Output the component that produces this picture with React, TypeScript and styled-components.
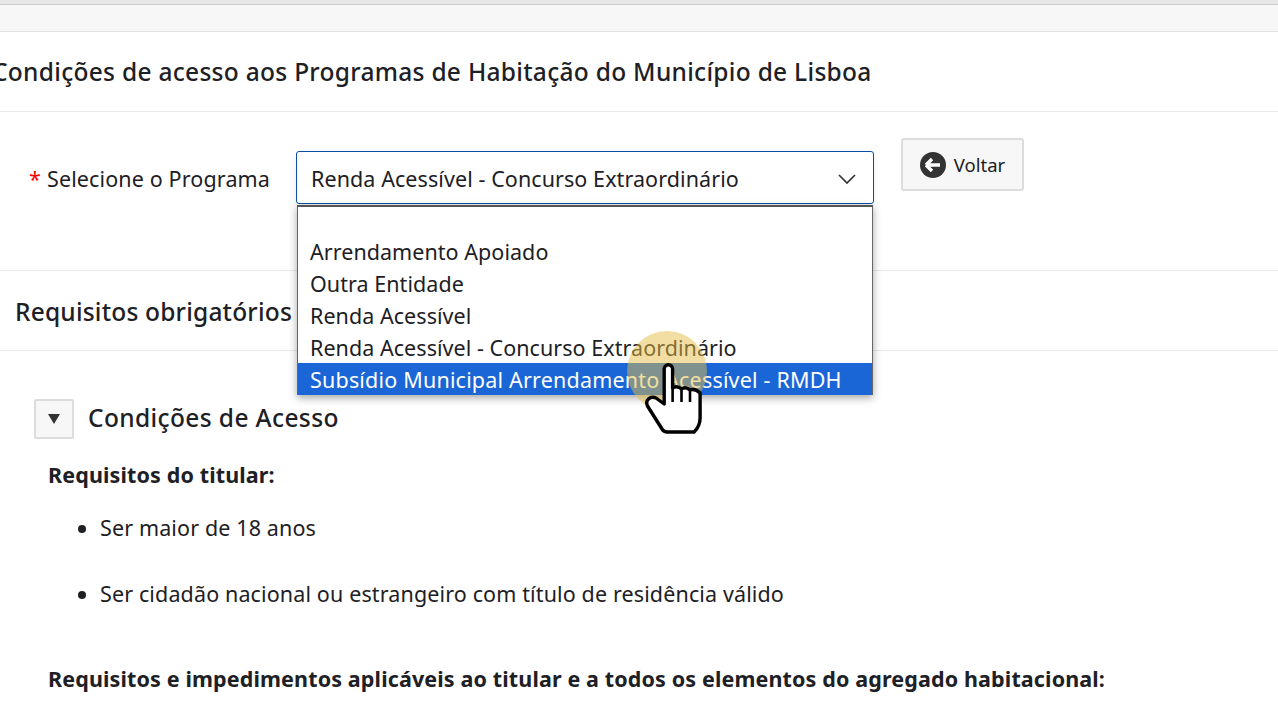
import React from "react";
import styled, { createGlobalStyle } from "styled-components";

const Global = createGlobalStyle`
  html, body { margin: 0; padding: 0; background: #fff; overflow: hidden; }
  body { font-family: "Noto Sans", "Open Sans", sans-serif; color: #1d2024; letter-spacing: 0.13px; }
  #root { width: 1278px; height: 718px; overflow: hidden; position: relative; }
`;

const TopEdge = styled.div`
  height: 4px;
  background: #e6e6e6;
  border-bottom: 1px solid #cfcfcf;
`;
const TabStrip = styled.div`
  height: 26px;
  background: #f7f7f7;
  border-bottom: 1px solid #e2e2e2;
`;
const TitleRow = styled.div`
  height: 79px;
  display: flex;
  align-items: center;
  border-bottom: 1px solid #e8e8e8;
  overflow: hidden;
`;
const Title = styled.h1`
  margin: 0 0 0 -8px;
  font-size: 24.5px;
  font-weight: 500;
  white-space: nowrap;
  letter-spacing: 0.29px;
`;
const FormRow = styled.div`
  height: 159px;
  box-sizing: border-box;
  border-bottom: 1px solid #e8e8e8;
  display: flex;
  align-items: flex-start;
  position: relative;
`;
const Label = styled.label`
  margin: 52px 0 0 29px;
  width: 267px;
  font-size: 21.5px;
  line-height: 30px;
  white-space: nowrap;
`;
const Star = styled.span`
  color: #f00;
  margin-right: 6px;
`;
const SelectBox = styled.div`
  margin-top: 39px;
  width: 578px;
  height: 53px;
  box-sizing: border-box;
  border: 1px solid #0b4ea2;
  border-radius: 3px;
  padding: 2px 17px 0 14px;
  display: flex;
  align-items: center;
  justify-content: space-between;
  font-size: 21.5px;
  letter-spacing: 0.08px;
  box-shadow: 0 4px 8px rgba(0, 0, 0, 0.08);
`;
const BackButton = styled.button`
  margin: 26px 0 0 27px;
  width: 123px;
  height: 53px;
  box-sizing: border-box;
  background: #f7f7f7;
  border: 2px solid #dcdcdc;
  border-radius: 3px;
  display: flex;
  align-items: center;
  justify-content: center;
  gap: 8px;
  font: inherit;
  font-size: 18.5px;
  color: inherit;
`;
const Menu = styled.ul`
  position: absolute;
  left: 297px;
  top: 93px;
  width: 576px;
  height: 190px;
  box-sizing: border-box;
  margin: 0;
  padding: 29px 0 0;
  list-style: none;
  background: #fff;
  border: 1px solid #666;
  border-top: 2px solid #555;
  border-bottom: 0;
  box-shadow: 0 3px 8px rgba(0, 0, 0, 0.35);
  z-index: 5;
`;
const MenuItem = styled.li<{ $active?: boolean }>`
  height: 32px;
  line-height: ${(p) => (p.$active ? "34px" : "32px")};
  margin-top: ${(p) => (p.$active ? "-1px" : "0")};
  padding-left: 12px;
  font-size: 21.5px;
  white-space: nowrap;
  letter-spacing: ${(p) => (p.$active ? "0.19px" : "0.05px")};
  background: ${(p) => (p.$active ? "#1a66d6" : "transparent")};
  color: ${(p) => (p.$active ? "#fff" : "inherit")};
`;
const SectionRow = styled.div`
  height: 79px;
  display: flex;
  align-items: center;
  padding-left: 15px;
  border-bottom: 1px solid #e8e8e8;
`;
const SectionTitle = styled.h2`
  margin: 2px 0 0;
  font-size: 24.5px;
  font-weight: 500;
  letter-spacing: 0.2px;
`;
const Content = styled.div`
  padding: 48px 0 0 34px;
`;
const Collapse = styled.div`
  display: flex;
  align-items: center;
  gap: 14px;
`;
const Toggle = styled.button`
  width: 40px;
  height: 40px;
  box-sizing: border-box;
  background: #f7f7f7;
  border: 2px solid #dcdcdc;
  border-radius: 2px;
  padding: 0;
  display: flex;
  align-items: center;
  justify-content: center;
`;
const CollapseTitle = styled.h3`
  margin: 0 0 3px;
  font-size: 24.5px;
  font-weight: 500;
  letter-spacing: 0.38px;
`;
const Strong = styled.p<{ $top: number }>`
  margin: ${(p) => p.$top}px 0 0 14px;
  font-size: 21.5px;
  font-weight: 700;
  line-height: 32px;
  white-space: nowrap;
`;
const Bullets = styled.ul`
  margin: 21px 0 0;
  padding: 0 0 0 66px;
  font-size: 21.5px;
  line-height: 32px;
  li { margin-bottom: 34px; }
`;
const Highlight = styled.div`
  position: absolute;
  left: 627px;
  top: 331px;
  width: 80px;
  height: 80px;
  border-radius: 50%;
  background: rgba(230, 190, 70, 0.5);
  z-index: 6;
`;
const HandCursor = styled.svg`
  position: absolute;
  left: 643px;
  top: 362px;
  z-index: 7;
`;

export default function App() {
  return (
    <>
      <Global />
      <TopEdge />
      <TabStrip />
      <TitleRow>
        <Title>Condições de acesso aos Programas de Habitação do Município de Lisboa</Title>
      </TitleRow>
      <FormRow>
        <Label><Star>*</Star>Selecione o Programa</Label>
        <SelectBox>
          <span>Renda Acessível - Concurso Extraordinário</span>
          <svg width="18" height="10" viewBox="0 0 18 10" fill="none" stroke="#333" strokeWidth="1.7">
            <path d="M1 1l8 8 8-8" />
          </svg>
        </SelectBox>
        <BackButton>
          <svg width="26" height="26" viewBox="0 0 26 26">
            <circle cx="13" cy="13" r="13" fill="#333" />
            <path d="M6 13l6-6M6 13l6 6M6 13h14" stroke="#fff" strokeWidth="3.4" fill="none" />
          </svg>
          Voltar
        </BackButton>
        <Menu>
          <MenuItem>Arrendamento Apoiado</MenuItem>
          <MenuItem>Outra Entidade</MenuItem>
          <MenuItem>Renda Acessível</MenuItem>
          <MenuItem>Renda Acessível - Concurso Extraordinário</MenuItem>
          <MenuItem $active>Subsídio Municipal Arrendamento Acessível - RMDH</MenuItem>
        </Menu>
      </FormRow>
      <SectionRow>
        <SectionTitle>Requisitos obrigatórios</SectionTitle>
      </SectionRow>
      <Content>
        <Collapse>
          <Toggle>
            <svg width="14" height="10" viewBox="0 0 14 10"><path d="M1 0h12L7 10z" fill="#333" /></svg>
          </Toggle>
          <CollapseTitle>Condições de Acesso</CollapseTitle>
        </Collapse>
        <Strong $top={20}>Requisitos do titular:</Strong>
        <Bullets>
          <li>Ser maior de 18 anos</li>
          <li>Ser cidadão nacional ou estrangeiro com título de residência válido</li>
        </Bullets>
        <Strong $top={53}>Requisitos e impedimentos aplicáveis ao titular e a todos os elementos do agregado habitacional:</Strong>
      </Content>
      <Highlight />
      <HandCursor width="62" height="74" viewBox="0 0 62 74">
        <path
          d="M21.2 41V7a4.2 4.2 0 0 1 8.4 0V26q4.5-3 9 1q4-3 8.5 1q5-2 10 3V56q0 8-6 14H24q-3 0-5-3L4.5 44q-2-4 1-7q3-3 7.5-1l8.2 6z"
          fill="#fff"
          stroke="#000"
          strokeWidth="3.4"
          strokeLinejoin="round"
        />
        <path d="M29.6 26v14M38.5 28v12M47 29v11" stroke="#000" strokeWidth="2.6" fill="none" />
      </HandCursor>
    </>
  );
}
